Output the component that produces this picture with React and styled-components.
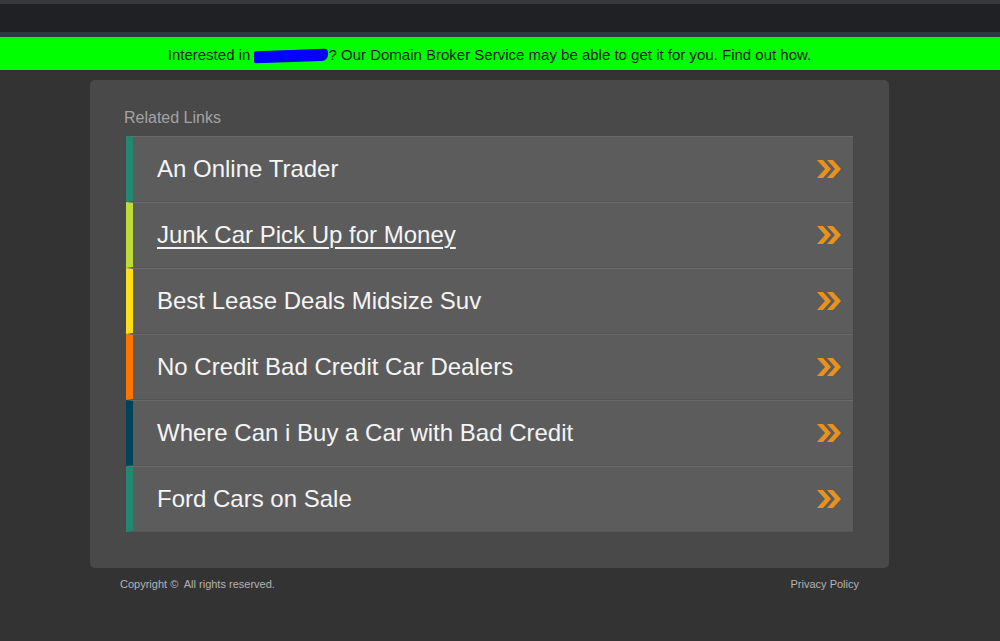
import React from 'react';
import styled, { createGlobalStyle } from 'styled-components';

const GlobalStyle = createGlobalStyle`
  html, body {
    margin: 0;
    padding: 0;
    background: #333333;
    font-family: "Liberation Sans", Arial, sans-serif;
  }
`;

const TopBar = styled.div`
  height: 28px;
  background: #202124;
  border-top: 4px solid #37383b;
  border-bottom: 5px solid #35363a;
`;

const Banner = styled.div`
  background: #00ff00;
  height: 33px;
`;

const BannerInner = styled.div`
  width: 979px;
  height: 100%;
  display: flex;
  align-items: center;
  justify-content: center;
  font-size: 15px;
  color: #1a1a1a;
  padding-top: 2px;
  box-sizing: border-box;
`;

const Redacted = styled.span`
  display: inline-block;
  width: 74px;
  height: 12px;
  background: #0000ff;
  border-radius: 2px 4px 6px 2px;
  transform: translateY(1px) skewY(-2deg);
`;

const Wrap = styled.div`
  width: 979px;
  padding-top: 10px;
`;

const Panel = styled.div`
  margin: 0 90px;
  background: #494949;
  border-radius: 5px;
  padding: 28px 36px 36px;
`;

const Heading = styled.div`
  font-size: 16px;
  color: #a3a3a3;
  margin-left: -2px;
  height: 28px;
  line-height: 20px;
`;

const List = styled.div`
  display: flex;
  flex-direction: column;
`;

const Row = styled.a`
  display: flex;
  align-items: center;
  justify-content: space-between;
  height: 64px;
  background: #5c5c5c;
  border-top: 1px solid #6a6a6a;
  border-bottom: 1px solid #555555;
  border-left: 7px solid ${p => p.$accent};
  padding: 0 11px 0 24px;
  color: #f5f5f5;
  font-size: 24px;
  text-decoration: ${p => (p.$underline ? 'underline' : 'none')};
  text-underline-offset: 4px;
  text-decoration-thickness: 2px;
`;

const Arrow = () => (
  <svg width="26" height="20" viewBox="0 0 26 20">
    <path d="M1 1h6l8 9-8 9H1l8-9z" fill="#e8911c" />
    <path d="M11 1h6l8 9-8 9h-6l8-9z" fill="#e8911c" />
  </svg>
);

const Footer = styled.div`
  display: flex;
  justify-content: space-between;
  margin: 0 120px;
  padding-top: 10px;
  font-size: 11px;
  color: #b4b4b4;
`;

const links = [
  { text: 'An Online Trader', accent: '#1f8a70' },
  { text: 'Junk Car Pick Up for Money', accent: '#bedb39', underline: true },
  { text: 'Best Lease Deals Midsize Suv', accent: '#ffe11a' },
  { text: 'No Credit Bad Credit Car Dealers', accent: '#fd7400' },
  { text: 'Where Can i Buy a Car with Bad Credit', accent: '#004358' },
  { text: 'Ford Cars on Sale', accent: '#1f8a70' },
];

const App = () => (
  <>
    <GlobalStyle />
    <TopBar />
    <Banner>
      <BannerInner>
        Interested in&nbsp;<Redacted />? Our Domain Broker Service may be able to get it for you. Find out how.
      </BannerInner>
    </Banner>
    <Wrap>
      <Panel>
        <Heading>Related Links</Heading>
        <List>
          {links.map(l => (
            <Row key={l.text} $accent={l.accent} $underline={l.underline}>
              <span>{l.text}</span>
              <Arrow />
            </Row>
          ))}
        </List>
      </Panel>
      <Footer>
        <span>Copyright ©&nbsp; All rights reserved.</span>
        <span>Privacy Policy</span>
      </Footer>
    </Wrap>
  </>
);

export default App;
